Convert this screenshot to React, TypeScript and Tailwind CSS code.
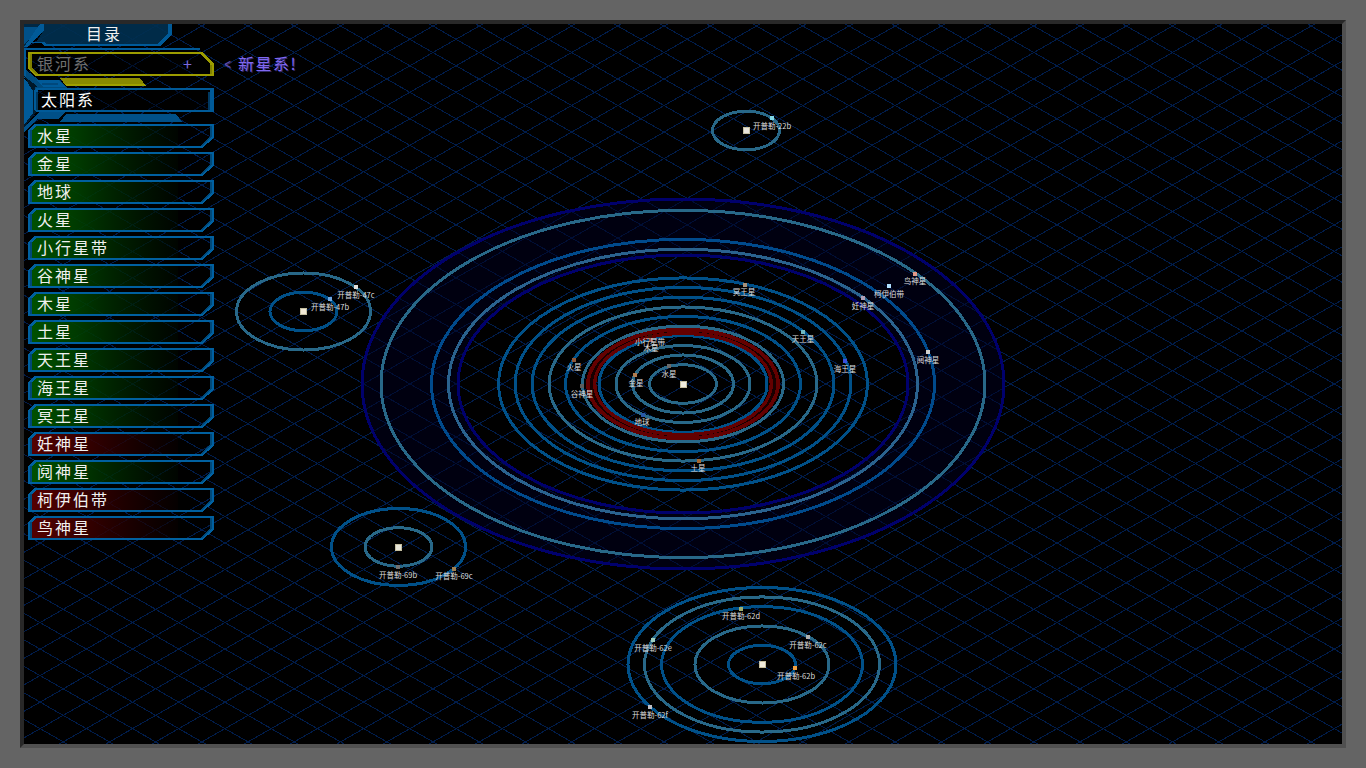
import React from "react";

const BLUE = "#005088";
const TEAL = "#286888";

type Orbit = { r: number; c: string };
type System = { x: number; y: number; star: string; orbits: Orbit[] };

const systems: System[] = [
  {
    x: 683, y: 384, star: "#f0ede0",
    orbits: [
      { r: 33.5, c: TEAL }, { r: 50.5, c: TEAL }, { r: 67, c: TEAL }, { r: 84, c: BLUE },
      { r: 100.5, c: TEAL }, { r: 117.5, c: BLUE }, { r: 134, c: TEAL }, { r: 151, c: BLUE },
      { r: 168, c: BLUE }, { r: 184.5, c: BLUE }, { r: 234.5, c: "#2a628e" }, { r: 251.5, c: "#004a8c" },
      { r: 302, c: TEAL },
    ],
  },
  { x: 746, y: 130.5, star: "#e8e4da", orbits: [{ r: 33.5, c: TEAL }] },
  { x: 303.5, y: 311.5, star: "#f0e8d4", orbits: [{ r: 33.5, c: BLUE }, { r: 67, c: TEAL }] },
  { x: 398.5, y: 547, star: "#e8e6d8", orbits: [{ r: 33.5, c: TEAL }, { r: 67, c: BLUE }] },
  {
    x: 762, y: 664.5, star: "#f0ecdf",
    orbits: [
      { r: 33.5, c: BLUE }, { r: 67, c: TEAL }, { r: 100.5, c: BLUE }, { r: 117.5, c: TEAL }, { r: 134, c: BLUE },
    ],
  },
];

type Body = { name: string; x: number; y: number; lx: number; ly: number; c: string };

const bodies: Body[] = [
  { name: "水星", x: 669, y: 366, lx: 669, ly: 374, c: "#6a6a6a" },
  { name: "金星", x: 635, y: 375, lx: 636, ly: 383, c: "#b07c50" },
  { name: "地球", x: 643, y: 415, lx: 642, ly: 422, c: "#2858a8" },
  { name: "火星", x: 574, y: 360, lx: 574, ly: 367, c: "#90583a" },
  { name: "小行星带", x: 650, y: 336, lx: 650, ly: 342, c: "#401008" },
  { name: "木星", x: 651, y: 340, lx: 651, ly: 348, c: "#a05040" },
  { name: "谷神星", x: 582, y: 386, lx: 582, ly: 394, c: "#5c5c5c" },
  { name: "土星", x: 699, y: 461, lx: 698, ly: 468, c: "#a86830" },
  { name: "天王星", x: 803, y: 332, lx: 803, ly: 339, c: "#70b8c0" },
  { name: "海王星", x: 845, y: 361, lx: 845, ly: 369, c: "#3850e0" },
  { name: "冥王星", x: 745, y: 285, lx: 744, ly: 292, c: "#a89078" },
  { name: "妊神星", x: 863, y: 298, lx: 863, ly: 306, c: "#b0a0b8" },
  { name: "柯伊伯带", x: 889, y: 286, lx: 889, ly: 294, c: "#b0e0ff" },
  { name: "鸟神星", x: 915, y: 274, lx: 915, ly: 281, c: "#e09888" },
  { name: "阋神星", x: 928, y: 352, lx: 928, ly: 360, c: "#d0d0d0" },
  { name: "开普勒-22b", x: 772, y: 118, lx: 772, ly: 126, c: "#80d8e8" },
  { name: "开普勒-47b", x: 330, y: 299, lx: 330, ly: 307, c: "#70a8e0" },
  { name: "开普勒-47c", x: 356, y: 287, lx: 356, ly: 295, c: "#e0e0e0" },
  { name: "开普勒-69b", x: 398, y: 567, lx: 398, ly: 575, c: "#707070" },
  { name: "开普勒-69c", x: 454, y: 569, lx: 454, ly: 576, c: "#a08050" },
  { name: "开普勒-62d", x: 741, y: 609, lx: 741, ly: 616, c: "#a0b070" },
  { name: "开普勒-62c", x: 808, y: 637, lx: 808, ly: 645, c: "#b0b0b0" },
  { name: "开普勒-62b", x: 795, y: 668, lx: 796, ly: 676, c: "#f0a040" },
  { name: "开普勒-62e", x: 653, y: 640, lx: 653, ly: 648, c: "#a0d0c0" },
  { name: "开普勒-62f", x: 650, y: 707, lx: 650, ly: 715, c: "#c0c0c8" },
];

const SLOPE = 26.514 / 46.22;
const gridLines = Array.from({ length: 110 }, (_, i) => i - 40);

function StarMap() {
  return (
    <svg className="absolute inset-0" width="1318" height="720" viewBox="24 24 1318 720">
      <g stroke="#001c4a" strokeWidth="1" shapeRendering="crispEdges">
        {gridLines.map((i) => {
          const x = 294.3 + i * 46.22;
          return (
            <React.Fragment key={i}>
              <line x1={x - 10} y1={26 - 10 * SLOPE} x2={x + 1300} y2={26 + 1300 * SLOPE} />
              <line x1={x + 10} y1={26 - 10 * SLOPE} x2={x - 1300} y2={26 + 1300 * SLOPE} />
            </React.Fragment>
          );
        })}
      </g>
      <g fill="none" shapeRendering="crispEdges">
        <path
          d="M362 384a321 185 0 1 0 642 0a321 185 0 1 0 -642 0M458 384a225 129 0 1 1 450 0a225 129 0 1 1 -450 0"
          fill="#000020" fillOpacity="0.5" fillRule="evenodd"
        />
        {systems.map((s) =>
          s.orbits.map((o) => (
            <ellipse key={`${s.x}-${o.r}`} cx={s.x} cy={s.y} rx={o.r} ry={o.r * 0.575} stroke={o.c} strokeWidth="3" />
          )),
        )}
        <ellipse cx="683" cy="384" rx="321" ry="185" stroke="#00006c" strokeWidth="3" />
        <ellipse cx="683" cy="384" rx="225" ry="129" stroke="#00006c" strokeWidth="3" />
        <ellipse cx="683" cy="384" rx="91.5" ry="52.4" stroke="#180000" strokeWidth="5" />
        <ellipse cx="683" cy="384" rx="95" ry="54.4" stroke="#640000" strokeWidth="3.8" />
        <ellipse cx="683" cy="384" rx="88.3" ry="50.6" stroke="#640000" strokeWidth="3.4" />
      </g>
      <g shapeRendering="crispEdges">
        {systems.map((s) => (
          <g key={s.x}>
            <rect x={Math.floor(s.x) - 3} y={Math.floor(s.y) - 3} width="7" height="7" fill="#c4bea0" />
            <rect x={Math.floor(s.x) - 2} y={Math.floor(s.y) - 2} width="5" height="5" fill={s.star} />
          </g>
        ))}
        {bodies.map((b) => (
          <rect key={b.name} x={b.x - 2} y={b.y - 2} width="4" height="4" fill={b.c} />
        ))}
      </g>
      <g className="font-['Noto_Sans_CJK_SC',sans-serif] text-[7.5px]" fill="#dddddd" textAnchor="middle">
        {bodies.map((b) => (
          <text key={b.name} x={b.lx} y={b.ly + 3}>{b.name}</text>
        ))}
      </g>
    </svg>
  );
}

function MenuOrnament() {
  return (
    <svg className="absolute left-0 top-0" width="195" height="110" viewBox="24 24 195 110" shapeRendering="crispEdges">
      <path d="M24 24h18v6L24 48z" fill="#002844" />
      <path d="M24 27h14v3L24 44z" fill="#005088" />
      <path d="M42 24h130v9l-13 13H46l-3-3h-7l6-10z" fill="#003050" fillOpacity="0.9" />
      <path d="M40 24h4v6l-12 12h12l3 2h111l10-11v-9h4v10l-12 12H45l-4-3h-9l-5 4h-3z" fill="#005a98" />
      <path d="M24 48h176v2H26v28h-2z" fill="#005a98" />
      <path d="M26 76v-6l13 10h21l7 8H40l-8 6z" fill="#004a7c" />
      <path d="M24 79l9 8v27l-9 13z" fill="#005a98" />
      <path d="M33 87l3 2v23l-12 16v-3l9-12z" fill="#001c30" />
      <path d="M24 76l14 11h-3l-3 3z" fill="#001828" />
      <path d="M36 80h23l6 7H43z" fill="#005a98" />
      <path d="M42 83h16v2H42z" fill="#00487c" />
      <path d="M24 128l12-13 4-3h26l-8 7H38L24 132z" fill="#005088" />
      <path d="M60 78h80l6 8H66z" fill="#8a8a00" />
      <path d="M64 84h81l1 2H66z" fill="#a0a000" />
      <path d="M66 114h110l6 8H60z" fill="#005088" />
      <path d="M32 54h170l10 9v11H38l-6-6z" fill="#000" fillOpacity="0.4" />
      <path d="M28 52h174l12 11v13H36l-8-7zM32 54v14l6 6h172V64l-10-10z" fill="#9c9c00" fillRule="evenodd" />
      <path d="M30 54h2v14l6 6h-3l-5-6zM210 65h2v9h-2z" fill="#808000" />
      <path d="M36 88h178v24H36l-2-3V91zM38 90v20h172V90z" fill="#005a98" fillRule="evenodd" />
      <path d="M38 90h170v20H38z" fill="#000" fillOpacity="0.4" />
      <path d="M36 92h2v18h-2z" fill="#003860" />
      <path d="M208 92h2v18h-2z" fill="#003860" />
    </svg>
  );
}

const planets: { name: string; locked?: boolean }[] = [
  { name: "水星" }, { name: "金星" }, { name: "地球" }, { name: "火星" }, { name: "小行星带" },
  { name: "谷神星" }, { name: "木星" }, { name: "土星" }, { name: "天王星" }, { name: "海王星" },
  { name: "冥王星" }, { name: "妊神星", locked: true }, { name: "阋神星" },
  { name: "柯伊伯带", locked: true }, { name: "鸟神星", locked: true },
];

function PlanetButton({ name, locked }: { name: string; locked?: boolean }) {
  const id = locked ? "menu-red" : "menu-green";
  return (
    <button className="relative flex h-6 w-[186px] shrink-0 items-center pl-[9px] text-left">
      <svg className="absolute inset-0" width="186" height="24" viewBox="0 0 186 24" shapeRendering="crispEdges">
        <path d="M4 7l4-5h142v20H4z" fill={`url(#${id})`} />
        <path d="M6 0h180v14l-12 10H0V6zM8 2L4 7v15h169l9-9V2z" fill="#0060a0" fillRule="evenodd" />
        <path d="M2 6h2v16H2zM182 2h2v11l-10 9h-2l10-9z" fill="#004878" />
      </svg>
      <span className="relative -top-px">{name}</span>
    </button>
  );
}

export default function App() {
  return (
    <div className="h-[768px] w-[1366px] overflow-hidden bg-[#646464] p-5">
      <main className="relative h-[728px] w-[1326px] overflow-hidden border-4 border-b-[#505050] border-l-[#282828] border-r-[#505050] border-t-[#282828] bg-black">
        <StarMap />
        <svg className="absolute" width="0" height="0">
          <defs>
            <linearGradient id="menu-green">
              <stop offset="0" stopColor="#005000" />
              <stop offset="0.3" stopColor="#004000" stopOpacity="0.92" />
              <stop offset="1" stopColor="#000800" stopOpacity="0.6" />
            </linearGradient>
            <linearGradient id="menu-red">
              <stop offset="0" stopColor="#540000" />
              <stop offset="0.3" stopColor="#420000" stopOpacity="0.92" />
              <stop offset="1" stopColor="#080000" stopOpacity="0.6" />
            </linearGradient>
          </defs>
        </svg>
        <MenuOrnament />
        <nav className="relative flex w-[300px] flex-col font-['Noto_Sans_CJK_SC',sans-serif] text-[16px] leading-6 tracking-[2px] text-[#f0f0f0]">
          <h1 className="h-[22px] pl-[62px] leading-[19px]">目录</h1>
          <div className="mt-[6px] flex h-6 items-center pb-[2px] pl-[13px] text-[#707070]">
            <span className="w-[146px]">银河系</span>
            <span className="w-[40px] text-[#7a6ae0]">+</span>
            <span className="whitespace-nowrap text-[#8068f0] [text-shadow:1px_1px_0_#30286a]">
              <span className="mr-[5px] inline-block w-[10px] scale-x-75 text-[#6050b0]">&lt;</span>
              <span className="tracking-[1.5px]">新星系!</span>
            </span>
          </div>
          <div className="mt-3 h-6 pl-[17px] leading-[22px] text-white">太阳系</div>
          <div className="mt-3 flex flex-col gap-1 pl-1">
            {planets.map((p) => (
              <PlanetButton key={p.name} {...p} />
            ))}
          </div>
        </nav>
      </main>
    </div>
  );
}
